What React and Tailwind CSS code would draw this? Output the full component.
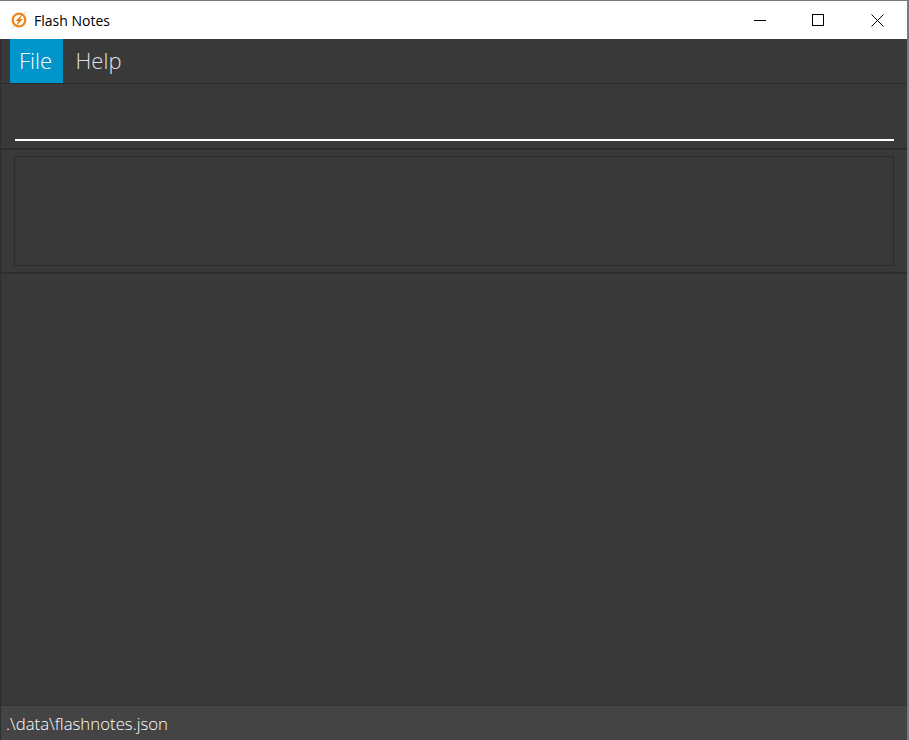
import React from "react";

function AppIcon() {
  return (
    <svg width="16" height="18" viewBox="0 0 16 18" className="shrink-0">
      <path d="M15 0.5 L1.5 17" stroke="#e6c8a6" strokeWidth="1" />
      <circle cx="8" cy="9" r="6.3" fill="#fff" stroke="#f0871c" strokeWidth="2.3" />
      <path d="M12 2.5 L4.6 10 L7.3 10 L4.8 15.5 L11.8 8 L9 8 Z" fill="#ef7a0a" />
    </svg>
  );
}

function WindowButtons() {
  return (
    <div className="flex items-center h-full">
      <div className="w-[59px] h-full flex items-center justify-center">
        <svg width="12" height="12" viewBox="0 0 12 12">
          <path d="M0 6.5 H12" stroke="#000" strokeWidth="1" />
        </svg>
      </div>
      <div className="w-[59px] h-full flex items-center justify-center pr-[2px]">
        <svg width="12" height="12" viewBox="0 0 12 12">
          <rect x="0.5" y="0.5" width="11" height="11" fill="none" stroke="#000" strokeWidth="1" />
        </svg>
      </div>
      <div className="w-[59px] h-full flex items-center justify-center">
        <svg width="13" height="13" viewBox="0 0 13 13">
          <path d="M0.5 0.5 L12.5 12.5 M12.5 0.5 L0.5 12.5" stroke="#000" strokeWidth="1" />
        </svg>
      </div>
    </div>
  );
}

export default function App() {
  return (
    <div className="w-[909px] h-[740px] bg-white overflow-hidden flex flex-col border-t border-t-[#7a7a7a] font-['Open_Sans',sans-serif]">
      {/* title bar */}
      <div className="h-[38px] shrink-0 flex items-center justify-between pl-[11px] bg-white border-r-2 border-r-[#7a7a7a]">
        <div className="flex items-center gap-[7px]">
          <AppIcon />
          <span className="text-[14px] text-black">Flash Notes</span>
        </div>
        <WindowButtons />
      </div>

      <div className="flex-1 flex flex-col bg-[#393939] border-r-2 border-r-[#7a7a7a] border-l border-l-[#2e2e2e]">
        {/* menu */}
        <div className="h-[45px] shrink-0 flex pl-[9px] border-b border-b-[#2c2c2c]">
          <div className="w-[53px] h-[44px] bg-[#0096cc] flex items-center justify-center pr-[2px] pb-[2px] text-[22px] font-light text-white">
            File
          </div>
          <div className="w-[71px] h-[44px] flex items-center justify-center pb-[2px] text-[22px] font-light text-[#e0e0e0]">
            Help
          </div>
        </div>

        {/* command box */}
        <div className="h-[66px] shrink-0 flex flex-col justify-end pl-[14px] pr-[13px] pb-[7px] border-b-2 border-b-[#2e2e2e]">
          <div className="h-[2px] bg-white" />
        </div>

        {/* result display */}
        <div className="h-[124px] shrink-0 pl-[13px] pr-[13px] pt-[6px] pb-[6px] border-b-2 border-b-[#2e2e2e]">
          <div className="h-full border border-[#2c2c2c]" />
        </div>

        {/* list */}
        <div className="flex-1" />

        {/* status bar */}
        <div className="h-[35px] shrink-0 bg-[#444444] border-t border-t-[#333333] flex items-center pl-[5px] pt-[2px] text-[16.8px] font-light text-white">
          .\data\flashnotes.json
        </div>
      </div>
    </div>
  );
}
